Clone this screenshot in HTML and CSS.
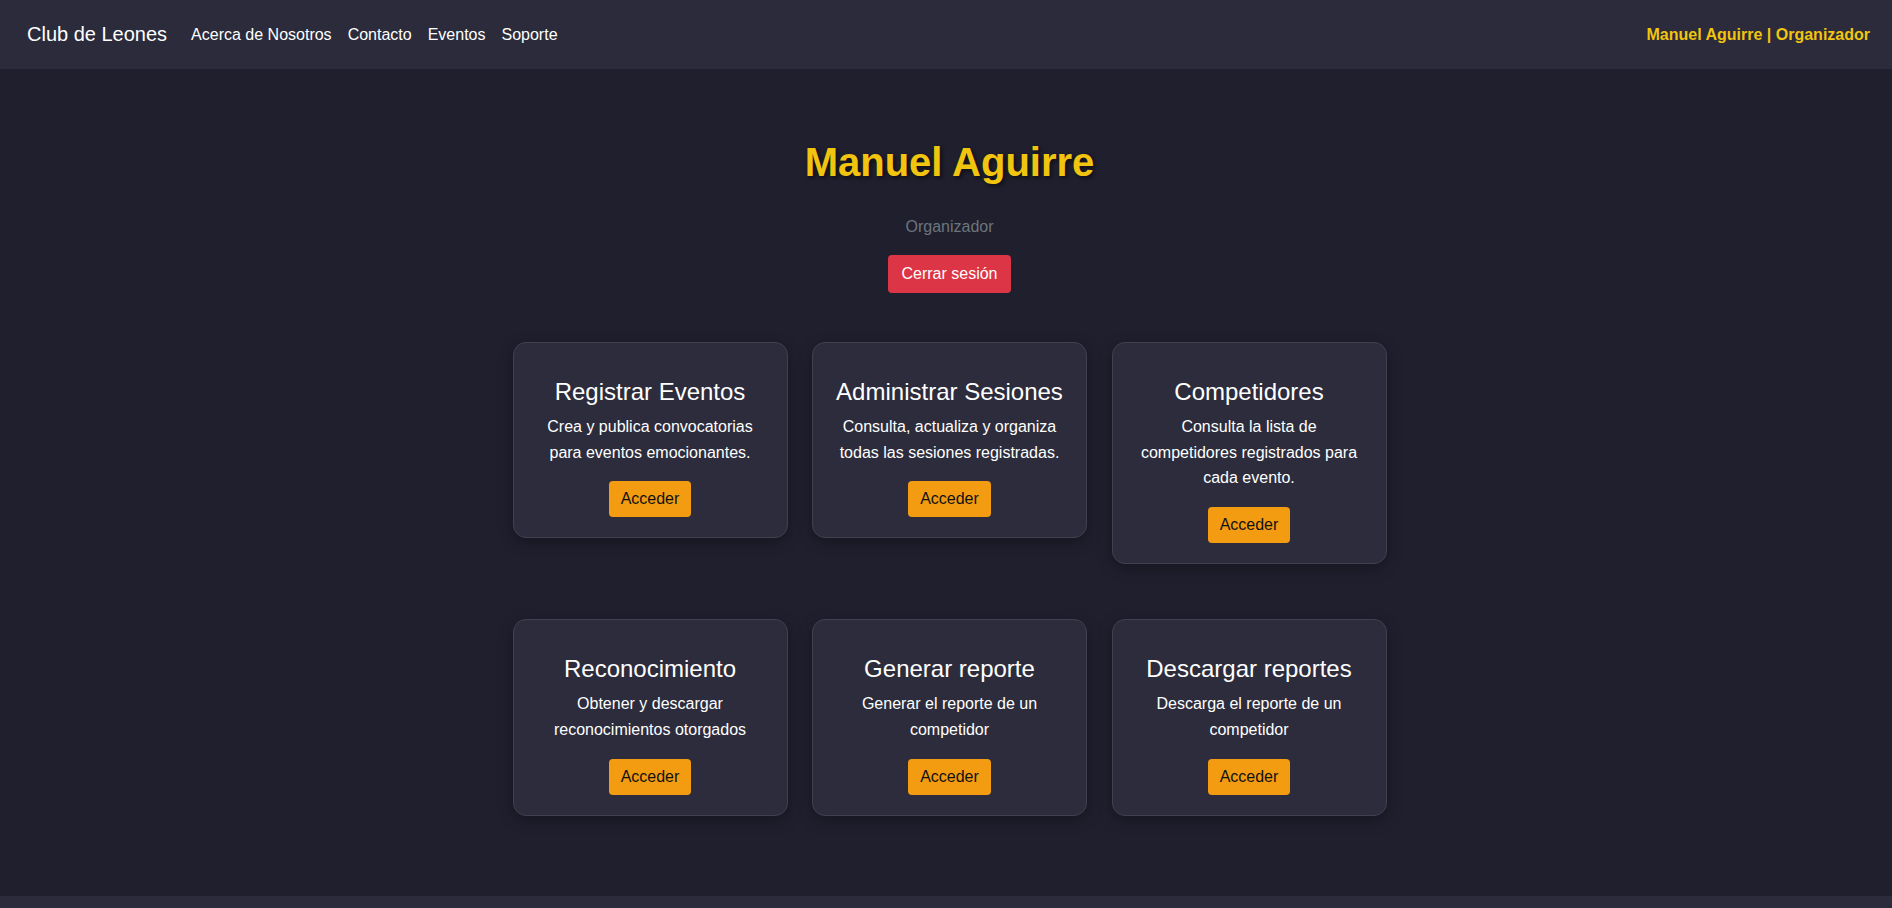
FILE: index.html
```html
<!DOCTYPE html>
<html lang="es">
<head>
<meta charset="utf-8">
<title>Club de Leones - Organizador</title>
<link rel="stylesheet" href="styles.css">
</head>
<body>
<header class="navbar">
  <div class="nav-left">
    <a class="brand" href="#">Club de Leones</a>
    <nav class="nav-links">
      <a href="#">Acerca de Nosotros</a>
      <a href="#">Contacto</a>
      <a href="#">Eventos</a>
      <a href="#">Soporte</a>
    </nav>
  </div>
  <span class="user-tag">Manuel Aguirre | Organizador</span>
</header>

<main class="main">
  <h1 class="profile-name">Manuel Aguirre</h1>
  <p class="profile-role">Organizador</p>
  <button class="btn-logout">Cerrar sesión</button>

  <section class="cards">
    <div class="card">
      <h3>Registrar Eventos</h3>
      <p>Crea y publica convocatorias para eventos emocionantes.</p>
      <button class="btn-go">Acceder</button>
    </div>
    <div class="card">
      <h3>Administrar Sesiones</h3>
      <p>Consulta, actualiza y organiza todas las sesiones registradas.</p>
      <button class="btn-go">Acceder</button>
    </div>
    <div class="card">
      <h3>Competidores</h3>
      <p>Consulta la lista de competidores registrados para cada evento.</p>
      <button class="btn-go">Acceder</button>
    </div>
    <div class="card">
      <h3>Reconocimiento</h3>
      <p>Obtener y descargar reconocimientos otorgados</p>
      <button class="btn-go">Acceder</button>
    </div>
    <div class="card">
      <h3>Generar reporte</h3>
      <p>Generar el reporte de un competidor</p>
      <button class="btn-go">Acceder</button>
    </div>
    <div class="card">
      <h3>Descargar reportes</h3>
      <p>Descarga el reporte de un competidor</p>
      <button class="btn-go">Acceder</button>
    </div>
  </section>
</main>

<footer class="footer"></footer>
</body>
</html>
```

FILE: styles.css
```css
* {
  box-sizing: border-box;
}

html, body {
  margin: 0;
  padding: 0;
}

body {
  background: #1f1f2e;
  color: #ffffff;
  font-family: "Liberation Sans", Arial, sans-serif;
  font-size: 16px;
}

.navbar {
  height: 69px;
  background: #2b2b3b;
  display: flex;
  align-items: center;
  justify-content: space-between;
  padding: 0 22px 0 27px;
}

.nav-left {
  display: flex;
  align-items: center;
}

.brand {
  color: #ffffff;
  text-decoration: none;
  font-size: 20px;
  margin-right: 16px;
}

.nav-links {
  display: flex;
  align-items: center;
}

.nav-links a {
  color: #ffffff;
  text-decoration: none;
  font-size: 16px;
  padding: 0 8px;
}

.user-tag {
  color: #f1c40f;
  font-weight: bold;
  font-size: 16px;
}

.main {
  display: flex;
  flex-direction: column;
  align-items: center;
  padding: 69px 0 80px 7px;
}

.profile-name {
  margin: 0 0 29px;
  font-size: 40px;
  line-height: 48px;
  font-weight: bold;
  color: #f1c40f;
  text-shadow: 2px 2px 4px rgba(0, 0, 0, 0.55);
}

.profile-role {
  margin: 0 0 16px;
  line-height: 24px;
  color: #6c757d;
}

.btn-logout {
  background: #dc3545;
  color: #ffffff;
  border: none;
  border-radius: 4px;
  font-family: inherit;
  font-size: 16px;
  line-height: 24px;
  padding: 7px 13px;
}

.cards {
  margin-top: 48.5px;
  display: grid;
  grid-template-columns: repeat(3, 275px);
  column-gap: 24.5px;
  row-gap: 54.5px;
  align-items: start;
}

.card {
  background: #2c2c3c;
  border: 1px solid #404050;
  border-radius: 13px;
  padding: 20px;
  text-align: center;
  box-shadow: 0 4px 15px rgba(0, 0, 0, 0.3);
}

.card h3 {
  margin: 15px 0 8px;
  font-size: 24px;
  line-height: 28.8px;
  font-weight: normal;
  color: #ffffff;
}

.card p {
  margin: 0 0 16px;
  font-size: 16px;
  line-height: 25.6px;
  color: #ffffff;
}

.btn-go {
  background: #f39c12;
  color: #111111;
  border: none;
  border-radius: 4px;
  font-family: inherit;
  font-size: 16px;
  line-height: 24px;
  padding: 6px 12px;
}

.footer {
  background: #2b2b3b;
  height: 60px;
}
```
